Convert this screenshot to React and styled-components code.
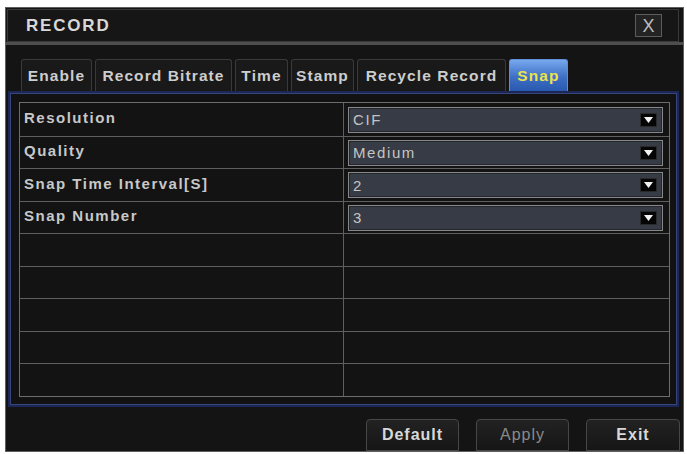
import React from "react";
import styled, { createGlobalStyle } from "styled-components";

const Global = createGlobalStyle`
  html, body { margin: 0; padding: 0; background: #ffffff; }
  body { font-family: "Liberation Sans", Arial, sans-serif; }
  * { box-sizing: border-box; }
`;

const Window = styled.div`
  margin: 7px 0 0 5px;
  width: 679px;
  height: 445px;
  background: #141414;
  border: 1px solid #5e5e5e;
  display: flex;
  flex-direction: column;
  overflow: hidden;
`;

const TitleBar = styled.div`
  height: 34px;
  margin: 1px 4px 0 1px;
  border: 1px solid #393939;
  background: #161616;
  display: flex;
  align-items: center;
  justify-content: space-between;
  padding: 0 16px 0 18px;
`;

const Title = styled.div`
  color: #d8d8d8;
  font-family: "Liberation Sans", Arial, sans-serif;
  font-weight: bold;
  font-size: 17px;
  letter-spacing: 1.8px;
`;

const CloseBox = styled.div`
  width: 27px;
  height: 23px;
  border: 1px solid #5c5c5c;
  background: #232323;
  color: #bdbdbd;
  font-family: "Liberation Sans", Arial, sans-serif;
  font-size: 18px;
  display: flex;
  align-items: center;
  justify-content: center;
  line-height: 1;
`;

const Separator = styled.div`
  height: 3px;
  background: #4e4e4e;
`;

const TabsRow = styled.div`
  display: flex;
  gap: 3px;
  padding: 14px 0 0 15px;
`;

const Tab = styled.div`
  width: ${(p) => p.$w}px;
  height: 32px;
  display: flex;
  align-items: center;
  justify-content: center;
  border: 1px solid ${(p) => (p.$active ? "#5f8fd8" : "#3a3a3a")};
  border-bottom: none;
  border-radius: 3px 3px 0 0;
  background: ${(p) =>
    p.$active ? "linear-gradient(#78a8ee, #3d6fc4 55%, #2a5ab0)" : "#191919"};
  color: ${(p) => (p.$active ? "#ece34a" : "#cdcdcd")};
  font-family: "Liberation Sans", Arial, sans-serif;
  font-weight: bold;
  font-size: 15.5px;
  letter-spacing: 1.1px;
  white-space: nowrap;
`;

const Panel = styled.div`
  height: 322px;
  margin: 0 4px 0 2px;
  border: 2px solid #1d2755;
  box-shadow: inset 0 0 0 1px #36457c;
  background: #121212;
  padding: 9px 7px 8px 9px;
`;

const Table = styled.div`
  height: 100%;
  border: 1px solid #6d6d6d;
  display: grid;
  grid-template-rows: repeat(9, 1fr);
  background: #131313;
`;

const Row = styled.div`
  display: grid;
  grid-template-columns: 324px 1fr;
  border-top: ${(p) => (p.$first ? "none" : "1px solid #5f5f5f")};
`;

const LabelCell = styled.div`
  border-right: 1px solid #5f5f5f;
  display: flex;
  align-items: center;
  padding: 0 0 4px 4px;
  color: #c8c8c8;
  font-family: "Liberation Sans", Arial, sans-serif;
  font-weight: bold;
  font-size: 15px;
  letter-spacing: 1.5px;
`;

const ValueCell = styled.div`
  display: flex;
  align-items: center;
  padding: 0 6px 0 4px;
`;

const Select = styled.div`
  flex: 1;
  height: 26px;
  border: 1px solid #878787;
  box-shadow: inset 0 0 0 1px #23262c;
  background: #363b45;
  display: flex;
  align-items: center;
  justify-content: space-between;
  padding: 0 5px 0 4px;
  color: #c4c4c4;
  font-family: "Liberation Sans", Arial, sans-serif;
  font-size: 15px;
  letter-spacing: 1.6px;
`;

const Arrow = styled.div`
  width: 17px;
  height: 14px;
  background: #050505;
  border: 1px solid #2a2a2a;
  display: flex;
  align-items: center;
  justify-content: center;
`;

const Footer = styled.div`
  display: flex;
  justify-content: flex-end;
  gap: 17px;
  padding: 12px 3px 0 0;
`;

const Button = styled.div`
  width: ${(p) => p.$w}px;
  height: 32px;
  border: 1px solid #474747;
  border-radius: 4px 4px 0 0;
  background: linear-gradient(#222, #161616);
  color: ${(p) => (p.$disabled ? "#8a8a8a" : "#d8d8d8")};
  font-family: "Liberation Sans", Arial, sans-serif;
  font-weight: ${(p) => (p.$disabled ? "normal" : "bold")};
  font-size: 16px;
  letter-spacing: 1px;
  display: flex;
  justify-content: center;
  padding-top: 6px;
`;

const tabs = [
  ["Enable", 71],
  ["Record Bitrate", 137],
  ["Time", 53],
  ["Stamp", 63],
  ["Recycle Record", 149],
  ["Snap", 59],
];

const rows = [
  ["Resolution", "CIF"],
  ["Quality", "Medium"],
  ["Snap Time Interval[S]", "2"],
  ["Snap Number", "3"],
  null,
  null,
  null,
  null,
  null,
];

export default function App() {
  return (
    <>
      <Global />
      <Window>
        <TitleBar>
          <Title>RECORD</Title>
          <CloseBox>X</CloseBox>
        </TitleBar>
        <Separator />
        <TabsRow>
          {tabs.map(([t, w]) => (
            <Tab key={t} $w={w} $active={t === "Snap"}>
              {t}
            </Tab>
          ))}
        </TabsRow>
        <Panel>
          <Table>
            {rows.map((r, i) => (
              <Row key={i} $first={i === 0}>
                <LabelCell>{r ? r[0] : ""}</LabelCell>
                <ValueCell>
                  {r && (
                    <Select>
                      <span>{r[1]}</span>
                      <Arrow>
                        <svg width="9" height="6" viewBox="0 0 9 6">
                          <path d="M0 0 H9 L4.5 6 Z" fill="#f2f2f2" />
                        </svg>
                      </Arrow>
                    </Select>
                  )}
                </ValueCell>
              </Row>
            ))}
          </Table>
        </Panel>
        <Footer>
          <Button $w={93}>Default</Button>
          <Button $w={93} $disabled>
            Apply
          </Button>
          <Button $w={94}>Exit</Button>
        </Footer>
      </Window>
    </>
  );
}
